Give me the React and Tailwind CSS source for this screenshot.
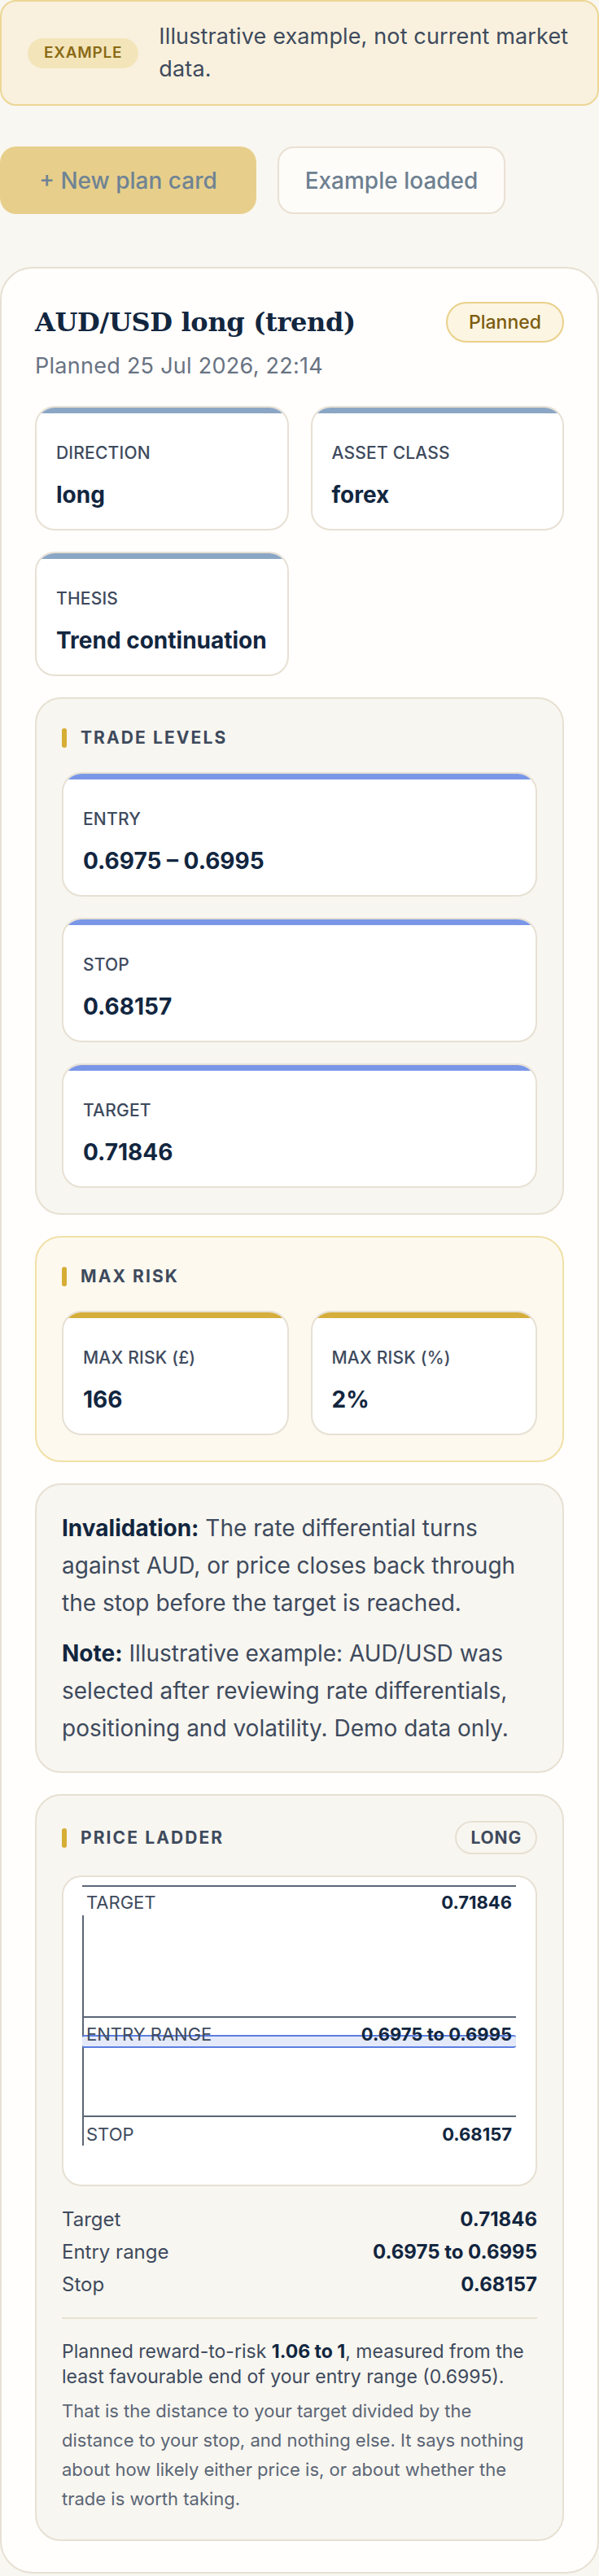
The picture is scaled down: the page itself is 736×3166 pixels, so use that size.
import React from "react";

const Stat = ({ label, value, barClass }) => (
  <div className="rounded-[24px] border-2 border-[#e7e0d4] bg-white overflow-hidden">
    <div className={barClass} />
    <div className="px-[24px] pt-[34px] pb-[24px]">
      <div className="text-[21px] leading-[30px] font-medium uppercase tracking-[0.01em] text-[#3e4a5d]">{label}</div>
      <div className="mt-[18px] text-[28px] leading-[36px] font-bold text-[#12263f]">{value}</div>
    </div>
  </div>
);

const SectionHeader = ({ title, right }) => (
  <div className="flex items-center justify-between h-[41px]">
    <div className="flex items-center gap-[17px]">
      <span className="w-[6px] h-[24px] rounded-full bg-[#d6ad35]" />
      <span className="text-[21px] font-bold tracking-[0.1em] text-[#3e4a5d]">{title}</span>
    </div>
    {right}
  </div>
);

const App = () => {
  return (
    <div className="min-h-screen bg-[#f9f7f1] font-['Inter',sans-serif] text-[#3e4a5d]">
      {/* example banner */}
      <div className="h-[130px] rounded-[20px] border-2 border-[#ecd695] bg-[#f9f1de] flex items-center gap-[25px] pl-[32px] pr-[12px]">
        <span className="shrink-0 h-[37px] px-[20px] rounded-full bg-[#f3e5b9] text-[#8a6a16] text-[19px] font-semibold tracking-[0.04em] flex items-center">
          EXAMPLE
        </span>
        <p className="text-[27px] leading-[40px] tracking-[0.005em] text-[#3e4a5d]">Illustrative example, not current market data.</p>
      </div>

      <div className="mt-[50px] flex gap-[26px]">
        <button className="w-[315px] h-[83px] rounded-[20px] bg-[#e7cf8b] text-[28px] font-medium text-[#6f8394]">
          + New plan card
        </button>
        <button className="w-[280px] h-[83px] rounded-[20px] border-2 border-[#e9e0d3] bg-[#fdfcf9] text-[28px] font-medium text-[#6d8091]">
          Example loaded
        </button>
      </div>

      {/* plan card */}
      <div className="mt-[65px] rounded-[40px] border-2 border-[#e7e0d3] bg-[#fffefc] px-[41px] pt-[41px] pb-[38px]">
        <div className="flex items-start justify-between">
          <h1 className="mt-[2px] font-['DejaVu_Serif',serif] font-bold text-[32px] leading-[46px] tracking-[-0.01em] text-[#12263f]">
            AUD/USD long (trend)
          </h1>
          <span className="h-[50px] px-[26px] rounded-full border-2 border-[#ead08a] bg-[#fcf5e2] text-[#7c5c0f] text-[23px] font-medium flex items-center">
            Planned
          </span>
        </div>
        <div className="mt-[13px] text-[27px] leading-[32px] tracking-[0.01em] text-[#697383]">Planned 25 Jul 2026, 22:14</div>

        <div className="mt-[33px] flex flex-col gap-[26px]">
          <div className="grid grid-cols-2 gap-x-[27px] gap-y-[26px]">
            <Stat label="Direction" value="long" barClass="h-[7px] bg-[#8ba6c5]" />
            <Stat label="Asset class" value="forex" barClass="h-[7px] bg-[#8ba6c5]" />
            <Stat label="Thesis" value="Trend continuation" barClass="h-[7px] bg-[#8ba6c5]" />
          </div>

          <section className="rounded-[32px] border-2 border-[#e7e0d3] bg-[#f8f6f0] px-[31px] pt-[27px] pb-[31px]">
            <SectionHeader title="TRADE LEVELS" />
            <div className="mt-[22px] flex flex-col gap-[26px]">
              <Stat label="Entry" value="0.6975 – 0.6995" barClass="h-[7px] bg-[#7a97e7]" />
              <Stat label="Stop" value="0.68157" barClass="h-[7px] bg-[#7a97e7]" />
              <Stat label="Target" value="0.71846" barClass="h-[7px] bg-[#7a97e7]" />
            </div>
          </section>

          <section className="rounded-[32px] border-2 border-[#f1e0a6] bg-[#fdf9ef] px-[31px] pt-[27px] pb-[31px]">
            <SectionHeader title="MAX RISK" />
            <div className="mt-[22px] grid grid-cols-2 gap-[27px]">
              <Stat label="Max risk (£)" value="166" barClass="h-[7px] bg-[#d5ae3c]" />
              <Stat label="Max risk (%)" value="2%" barClass="h-[7px] bg-[#d5ae3c]" />
            </div>
          </section>

          <section className="rounded-[32px] border-2 border-[#e7e0d3] bg-[#f8f6f0] px-[31px] pt-[30px] pb-[30px] text-[28px] leading-[46px] text-[#3e4a5d]">
            <p>
              <strong className="font-bold text-[#12263f]">Invalidation:</strong> The rate differential turns against AUD, or price closes back through the stop before the target is reached.
            </p>
            <p className="mt-[16px]">
              <strong className="font-bold text-[#12263f]">Note:</strong> Illustrative example: AUD/USD was selected after reviewing rate differentials, positioning and volatility. Demo data only.
            </p>
          </section>

          <section className="rounded-[32px] border-2 border-[#e7e0d3] bg-[#f8f6f0] px-[31px] pt-[31px] pb-[32px]">
            <SectionHeader
              title="PRICE LADDER"
              right={
                <span className="h-[41px] px-[17px] rounded-full border-2 border-[#e7e0d3] text-[21px] font-bold tracking-[0.04em] text-[#3e4a5d] flex items-center">
                  LONG
                </span>
              }
            />

            {/* ladder chart */}
            <div className="mt-[26px] rounded-[24px] border-2 border-[#e7e0d4] bg-white pl-[23px] pr-[24px] pt-[10px] pb-[48px]">
              <div className="relative h-[320px] text-[22px]">
                <div className="absolute left-0 right-0 top-0 h-[2px] bg-[#5b6677]" />
                <div className="absolute left-[5px] right-[5px] top-[4px] h-[34px] flex items-center justify-between">
                  <span className="text-[#3e4a5d]">TARGET</span>
                  <span className="font-bold text-[#12263f]">0.71846</span>
                </div>
                <div className="absolute left-0 top-[37px] bottom-0 w-[2px] bg-[#5b6677]" />

                <div className="absolute left-0 right-0 top-[161px] h-[2px] bg-[#5b6677]" />
                <div className="absolute left-0 right-0 top-[184px] h-[16px] rounded-[3px] border-y-2 border-[#5b7fe0] bg-[#e5eafb]" />
                <div className="absolute left-[5px] right-[5px] top-[166px] h-[34px] flex items-center justify-between">
                  <span className="text-[#3e4a5d]">ENTRY RANGE</span>
                  <span className="font-bold text-[#12263f]">0.6975 to 0.6995</span>
                </div>

                <div className="absolute left-0 right-0 top-[283px] h-[2px] bg-[#5b6677]" />
                <div className="absolute left-[5px] right-[5px] top-[289px] h-[34px] flex items-center justify-between">
                  <span className="text-[#3e4a5d]">STOP</span>
                  <span className="font-bold text-[#12263f]">0.68157</span>
                </div>
              </div>
            </div>

            <div className="mt-[21px] text-[24px] leading-[40px]">
              <div className="flex justify-between">
                <span>Target</span>
                <span className="font-bold text-[#12263f]">0.71846</span>
              </div>
              <div className="flex justify-between">
                <span>Entry range</span>
                <span className="font-bold text-[#12263f]">0.6975 to 0.6995</span>
              </div>
              <div className="flex justify-between">
                <span>Stop</span>
                <span className="font-bold text-[#12263f]">0.68157</span>
              </div>
            </div>

            <div className="mt-[20px] border-t-2 border-[#e7e0d3] pt-[25px]">
              <p className="text-[23px] leading-[31px] text-[#3e4a5d]">
                Planned reward-to-risk <strong className="font-bold text-[#12263f]">1.06 to 1</strong>, measured from the least favourable end of your entry range (0.6995).
              </p>
              <p className="mt-[8px] text-[22px] leading-[36px] text-[#5b6676]">
                That is the distance to your target divided by the distance to your stop, and nothing else. It says nothing about how likely either price is, or about whether the trade is worth taking.
              </p>
            </div>
          </section>
        </div>
      </div>
    </div>
  );
};

export default App;
